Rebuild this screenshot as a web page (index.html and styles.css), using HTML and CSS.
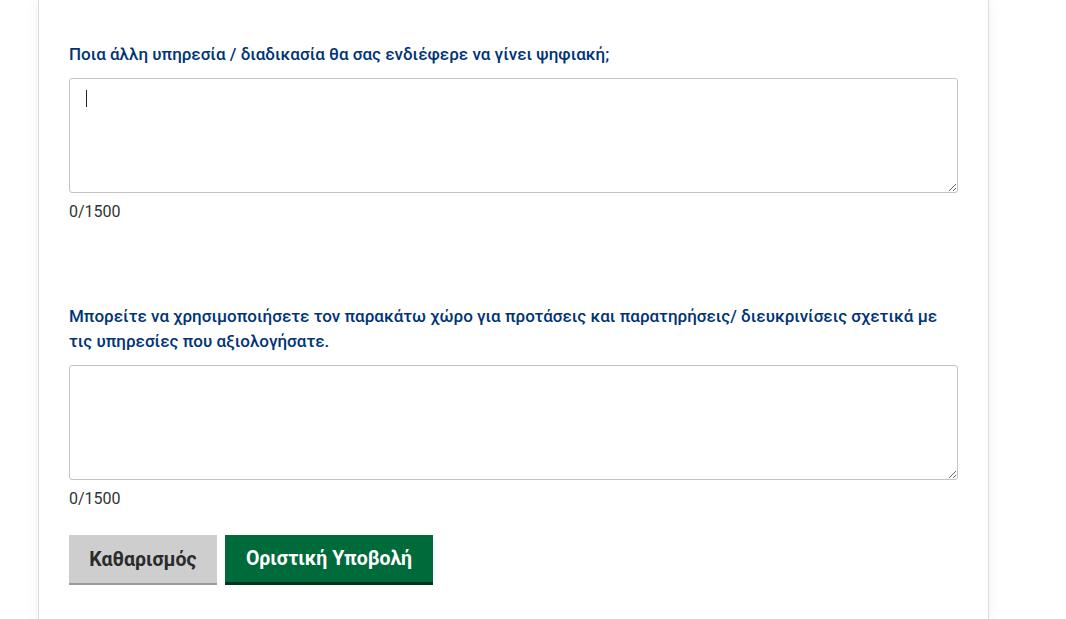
FILE: index.html
```html
<!DOCTYPE html>
<html lang="el">
<head>
<meta charset="utf-8">
<title>Φόρμα</title>
<link rel="stylesheet" href="styles.css">
</head>
<body>
<div class="page">
  <main class="card">
    <div class="field first">
      <label class="label" for="q1">Ποια άλλη υπηρεσία / διαδικασία θα σας ενδιέφερε να γίνει ψηφιακή;</label>
      <div class="area-wrap">
        <textarea id="q1" class="area"></textarea>
        <span class="caret"></span>
      </div>
      <div class="counter">0/1500</div>
    </div>
    <div class="field second">
      <label class="label" for="q2">Μπορείτε να χρησιμοποιήσετε τον παρακάτω χώρο για προτάσεις και παρατηρήσεις/ διευκρινίσεις σχετικά με τις υπηρεσίες που αξιολογήσατε.</label>
      <div class="area-wrap">
        <textarea id="q2" class="area"></textarea>
      </div>
      <div class="counter">0/1500</div>
    </div>
    <div class="actions">
      <button class="btn btn-clear" type="button">Καθαρισμός</button>
      <button class="btn btn-submit" type="button">Οριστική Υποβολή</button>
    </div>
  </main>
</div>
</body>
</html>
```

FILE: styles.css
```css
html, body {
  margin: 0;
  padding: 0;
  background: #ffffff;
  font-family: Roboto, "Noto Sans", "Liberation Sans", sans-serif;
  color: #222;
}

.page {
  padding-left: 38px;
  width: 951px;
}

.card {
  background: #fff;
  border-left: 1px solid #dcdcdc;
  border-right: 1px solid #dcdcdc;
  box-shadow: 0 0 14px rgba(0, 0, 0, 0.06);
  padding: 42px 30px 40px 30px;
  min-height: 600px;
  box-sizing: border-box;
}

.field {
  display: flex;
  flex-direction: column;
}

.second {
  margin-top: 80px;
}

.label {
  font-size: 17px;
  font-weight: 500;
  line-height: 25px;
  color: #003476;
  padding-right: 20px;
}

.area-wrap {
  position: relative;
  margin-top: 11px;
}

.area {
  display: block;
  width: 100%;
  height: 115px;
  box-sizing: border-box;
  border: 1px solid #c4c4c4;
  border-radius: 3px;
  padding: 12px 16px;
  font-family: inherit;
  font-size: 16px;
  resize: vertical;
  background: #fff;
  outline: none;
}

.caret {
  position: absolute;
  left: 17px;
  top: 12px;
  width: 1px;
  height: 17px;
  background: #222;
}

.counter {
  font-size: 16px;
  line-height: 24px;
  color: #333;
  margin-top: 7px;
}

.actions {
  display: flex;
  gap: 8px;
  margin-top: 24px;
}

.btn {
  font-family: inherit;
  font-size: 19.5px;
  font-weight: 700;
  height: 50px;
  border: none;
  border-radius: 0;
  cursor: pointer;
  box-sizing: border-box;
  padding: 0 8px;
}

.btn-clear {
  width: 148px;
  background: #cecece;
  color: #2b2b2b;
  border-bottom: 2px solid #9b9b9b;
}

.btn-submit {
  width: 208px;
  background: #006b3a;
  color: #fff;
  border-bottom: 3px solid #00361d;
}
```
